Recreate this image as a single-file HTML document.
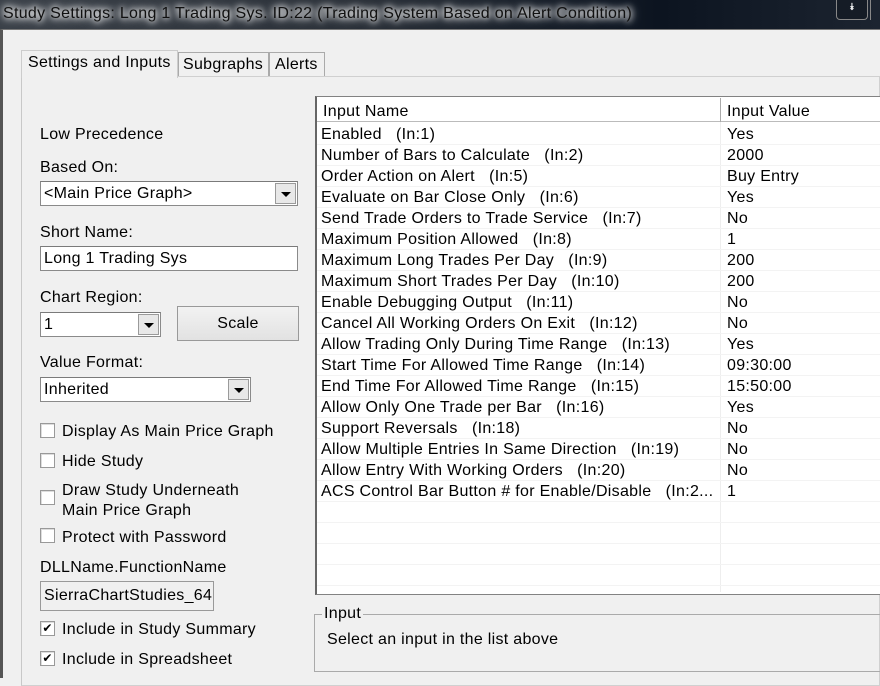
<!DOCTYPE html>
<html><head><style>
*{margin:0;padding:0;box-sizing:border-box}
body{width:880px;height:678px;overflow:hidden;background:#f0f0f0;font-family:"Liberation Sans",Arial,sans-serif;font-size:16px;color:#000;position:relative;letter-spacing:0.3px}
.a{position:absolute;white-space:nowrap}
.title{left:0;top:0;width:880px;height:29px;background:linear-gradient(90deg,#3a4048 0%,#2a3038 40%,#0c1420 75%,#1c2430 100%);color:#000}
.combo{background:#fff;border:1px solid #8a8a8a;border-top-color:#7a7a7a;height:25px;padding:3px 0 0 3px}
.dd{position:absolute;right:1px;top:1px;width:21px;height:21px;background:#e8e8e8;border:1px solid #9a9a9a}
.dd:after{content:"";position:absolute;left:5px;top:8px;border-left:5px solid transparent;border-right:5px solid transparent;border-top:5px solid #000}
.cb{width:15px;height:15px;border:1px solid #999;background:#fff;box-shadow:inset 1px 1px 0 #ddd}
.row{position:absolute;left:317px;width:563px;height:21px;border-bottom:1px solid #f3f3f3}
.row span{position:absolute;top:2px}
</style></head><body>
<div class="a title"><span class="a" style="left:3px;top:5px;color:#111;text-shadow:0 0 6px #fff,0 0 8px #fff,0 0 12px #fff">Study Settings: Long 1 Trading Sys. ID:22 (Trading System Based on Alert Condition)</span>
<div class="a" style="left:836px;top:0;width:32px;height:20px;border:1px solid #888;border-top:none;border-radius:0 0 4px 4px;background:#151c26;color:#fff;font-size:10px;text-align:center;line-height:16px">⯯</div>
<div class="a" style="left:870px;top:0;width:10px;height:20px;border-left:1px solid #888"></div></div>
<div class="a" style="left:0;top:29px;width:880px;height:649px;border-left:3px solid #555;border-top:1px solid #777"></div>
<div class="a" style="left:21px;top:76px;width:859px;height:610px;border:1px solid #d0d0d0;border-left-color:#c8c8c8"></div>
<div class="a" style="left:21px;top:50px;width:157px;height:28px;border:1px solid #ccc;border-bottom:none;background:#f0f0f0;padding:3px 0 0 6px">Settings and Inputs</div>
<div class="a" style="left:178px;top:52px;width:91px;height:24px;border:1px solid #aaa;border-bottom:none;padding:3px 0 0 4px;background:#f0f0f0">Subgraphs</div>
<div class="a" style="left:269px;top:52px;width:56px;height:24px;border:1px solid #aaa;border-bottom:none;padding:3px 0 0 5px;background:#f0f0f0">Alerts</div>
<div class="a" style="left:40px;top:126px">Low Precedence</div>
<div class="a" style="left:40px;top:159px">Based On:</div>
<div class="a combo" style="left:40px;top:181px;width:258px">&lt;Main Price Graph&gt;<div class="dd"></div></div>
<div class="a" style="left:40px;top:224px">Short Name:</div>
<div class="a combo" style="left:40px;top:246px;width:258px">Long 1 Trading Sys</div>
<div class="a" style="left:40px;top:289px">Chart Region:</div>
<div class="a combo" style="left:40px;top:312px;width:121px">1<div class="dd"></div></div>
<div class="a" style="left:177px;top:306px;width:122px;height:35px;border:1px solid #999;background:linear-gradient(#f2f2f2,#e2e2e2);text-align:center;line-height:33px">Scale</div>
<div class="a" style="left:40px;top:354px">Value Format:</div>
<div class="a combo" style="left:40px;top:377px;width:211px">Inherited<div class="dd"></div></div>
<div class="a cb" style="left:40px;top:423px"></div><div class="a" style="left:62px;top:423px">Display As Main Price Graph</div>
<div class="a cb" style="left:40px;top:453px"></div><div class="a" style="left:62px;top:453px">Hide Study</div>
<div class="a cb" style="left:40px;top:490px"></div><div class="a" style="left:62px;top:481px;line-height:20px">Draw Study Underneath<br>Main Price Graph</div>
<div class="a cb" style="left:40px;top:528px"></div><div class="a" style="left:62px;top:529px">Protect with Password</div>
<div class="a" style="left:40px;top:559px">DLLName.FunctionName</div>
<div class="a" style="left:40px;top:581px;width:174px;height:30px;border:1px solid #999;background:#f0f0f0;padding:5px 0 0 3px">SierraChartStudies_64</div>
<div class="a cb" style="left:40px;top:621px;font-size:12px;line-height:12px;text-align:center">✔</div><div class="a" style="left:62px;top:621px">Include in Study Summary</div>
<div class="a cb" style="left:40px;top:651px;font-size:12px;line-height:12px;text-align:center">✔</div><div class="a" style="left:62px;top:651px">Include in Spreadsheet</div>
<div class="a" style="left:315px;top:96px;width:565px;height:499px;background:#fff;border:1px solid #828282;border-left:2px solid #666;border-right:none"></div>
<div class="a" style="left:317px;top:98px;width:563px;height:24px;border-bottom:1px solid #bbb"></div>
<div class="a" style="left:720px;top:98px;width:1px;height:24px;background:#aaa"></div>
<div class="a" style="left:720px;top:122px;width:1px;height:470px;background:#eee"></div>
<div class="a" style="left:323px;top:103px">Input Name</div>
<div class="a" style="left:727px;top:103px">Input Value</div>
<div id="rows"></div>
<script>
var r=[["Enabled   (In:1)","Yes"],["Number of Bars to Calculate   (In:2)","2000"],["Order Action on Alert   (In:5)","Buy Entry"],["Evaluate on Bar Close Only   (In:6)","Yes"],["Send Trade Orders to Trade Service   (In:7)","No"],["Maximum Position Allowed   (In:8)","1"],["Maximum Long Trades Per Day   (In:9)","200"],["Maximum Short Trades Per Day   (In:10)","200"],["Enable Debugging Output   (In:11)","No"],["Cancel All Working Orders On Exit   (In:12)","No"],["Allow Trading Only During Time Range   (In:13)","Yes"],["Start Time For Allowed Time Range   (In:14)","09:30:00"],["End Time For Allowed Time Range   (In:15)","15:50:00"],["Allow Only One Trade per Bar   (In:16)","Yes"],["Support Reversals   (In:18)","No"],["Allow Multiple Entries In Same Direction   (In:19)","No"],["Allow Entry With Working Orders   (In:20)","No"],["ACS Control Bar Button # for Enable/Disable   (In:2...","1"]];
var h="";for(var i=0;i<22;i++){var t=124+i*21;var a=r[i]||["",""];h+='<div class="row" style="top:'+t+'px"><span style="left:4px;white-space:pre">'+a[0]+'</span><span style="left:410px">'+a[1]+'</span></div>';}
document.getElementById("rows").innerHTML=h;
</script>
<div class="a" style="left:314px;top:614px;width:570px;height:58px;border:1px solid #aaa"></div>
<div class="a" style="left:322px;top:605px;background:#f0f0f0;padding:0 2px">Input</div>
<div class="a" style="left:327px;top:631px">Select an input in the list above</div>
</body></html>
